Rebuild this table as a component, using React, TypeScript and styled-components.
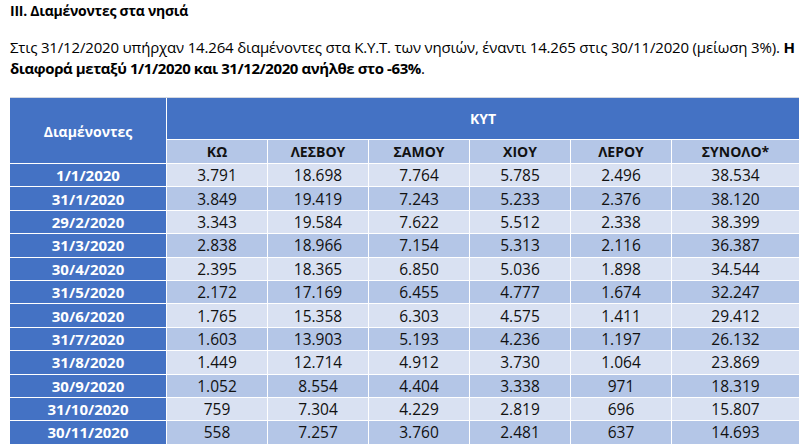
import React from "react";
import styled, { createGlobalStyle } from "styled-components";

const Global = createGlobalStyle`
  html, body { margin: 0; padding: 0; background: #ffffff; }
  body { font-family: "Open Sans", "Noto Sans", sans-serif; color: #000; }
`;

const Page = styled.div`
  padding: 0 10px;
  width: 810px;
  box-sizing: border-box;
`;

const Title = styled.h3`
  margin: 0;
  padding-top: 1px;
  font-size: 14px;
  font-weight: 700;
  line-height: 20px;
  letter-spacing: -0.25px;
`;

const Para = styled.p`
  margin: 16px 0 0;
  font-size: 15px;
  line-height: 21px;
  letter-spacing: -0.17px;
`;

const Strong = styled.b`
  font-weight: 700;
  letter-spacing: -0.42px;
`;

const Table = styled.div`
  margin-top: 18px;
  display: grid;
  grid-template-columns: 156px repeat(5, 100px) 127px;
  grid-template-rows: 41px 23px repeat(12, 22.4px);
  gap: 1px;
  background: #ffffff;
  border-top: 1px solid #d4d8e0;
  width: 789px;
`;

const Cell = styled.div<{ $tone: "blue" | "dark" | "light" }>`
  display: flex;
  align-items: center;
  justify-content: center;
  background: ${(p) =>
    p.$tone === "blue" ? "#4472c4" : p.$tone === "dark" ? "#b4c6e7" : "#d9e1f2"};
  font-size: 15.5px;
  color: #111;
  white-space: nowrap;
`;

const CornerHead = styled(Cell)`
  grid-row: span 2;
  color: #fff;
  font-weight: 700;
  font-size: 14px;
  padding-top: 2px;
`;

const KytHead = styled(Cell)`
  grid-column: span 6;
  color: #fff;
  font-weight: 700;
  font-size: 14px;
`;

const ColHead = styled(Cell)`
  font-weight: 700;
  font-size: 14px;
  color: #111;
`;

const DateCell = styled(Cell)`
  color: #fff;
  font-weight: 700;
  font-size: 15px;
`;

const cols = ["ΚΩ", "ΛΕΣΒΟΥ", "ΣΑΜΟΥ", "ΧΙΟΥ", "ΛΕΡΟΥ", "ΣΥΝΟΛΟ*"];

const rows: [string, string[]][] = [
  ["1/1/2020", ["3.791", "18.698", "7.764", "5.785", "2.496", "38.534"]],
  ["31/1/2020", ["3.849", "19.419", "7.243", "5.233", "2.376", "38.120"]],
  ["29/2/2020", ["3.343", "19.584", "7.622", "5.512", "2.338", "38.399"]],
  ["31/3/2020", ["2.838", "18.966", "7.154", "5.313", "2.116", "36.387"]],
  ["30/4/2020", ["2.395", "18.365", "6.850", "5.036", "1.898", "34.544"]],
  ["31/5/2020", ["2.172", "17.169", "6.455", "4.777", "1.674", "32.247"]],
  ["30/6/2020", ["1.765", "15.358", "6.303", "4.575", "1.411", "29.412"]],
  ["31/7/2020", ["1.603", "13.903", "5.193", "4.236", "1.197", "26.132"]],
  ["31/8/2020", ["1.449", "12.714", "4.912", "3.730", "1.064", "23.869"]],
  ["30/9/2020", ["1.052", "8.554", "4.404", "3.338", "971", "18.319"]],
  ["31/10/2020", ["759", "7.304", "4.229", "2.819", "696", "15.807"]],
  ["30/11/2020", ["558", "7.257", "3.760", "2.481", "637", "14.693"]],
];

export default function App() {
  return (
    <>
      <Global />
      <Page>
        <Title>III. Διαμένοντες στα νησιά</Title>
        <Para>
          Στις 31/12/2020 υπήρχαν 14.264 διαμένοντες στα Κ.Υ.Τ. των νησιών, έναντι 14.265 στις
          30/11/2020 (μείωση 3%). <Strong>Η διαφορά μεταξύ 1/1/2020 και 31/12/2020 ανήλθε στο -63%</Strong>.
        </Para>
        <Table>
          <CornerHead $tone="blue">Διαμένοντες</CornerHead>
          <KytHead $tone="blue">ΚΥΤ</KytHead>
          {cols.map((c) => (
            <ColHead key={c} $tone="dark">
              {c}
            </ColHead>
          ))}
          {rows.map(([d, vals], i) => (
            <React.Fragment key={d}>
              <DateCell $tone="blue">{d}</DateCell>
              {vals.map((v, j) => (
                <Cell key={j} $tone={i % 2 === 0 ? "light" : "dark"}>
                  {v}
                </Cell>
              ))}
            </React.Fragment>
          ))}
        </Table>
      </Page>
    </>
  );
}
